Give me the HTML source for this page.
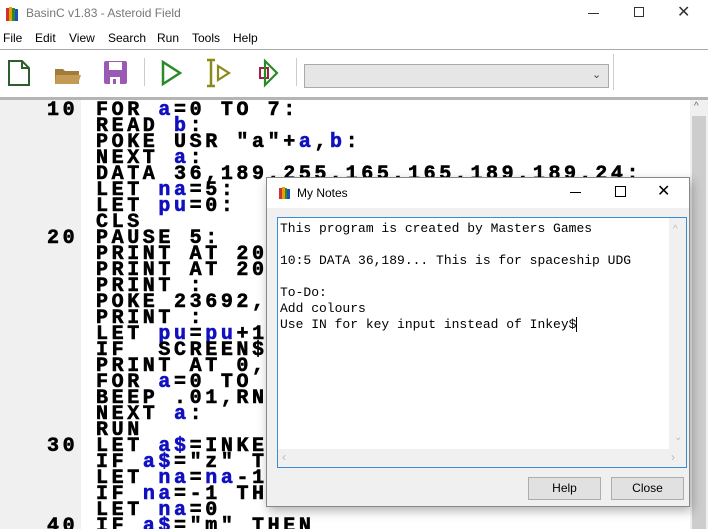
<!DOCTYPE html>
<html><head><style>
*{margin:0;padding:0;box-sizing:border-box}
body{width:708px;height:529px;overflow:hidden;background:#fff;font-family:"Liberation Sans",sans-serif;position:relative}
.abs{position:absolute}
.menu span{position:absolute;top:31px;font-size:12px;color:#000}
.code{position:absolute;left:0;top:100px;width:690px;height:429px;background:#fff;overflow:hidden}
.gut{position:absolute;left:0;top:0;width:81px;height:429px;background:#f0f0f0}
.ln{position:absolute;height:16px;line-height:16px;margin-top:3px;font-family:"Liberation Mono",monospace;font-weight:bold;font-size:20px;letter-spacing:3.6px;white-space:pre;color:#000;-webkit-text-stroke:0.6px currentColor}
.b{color:#1010c0}
.mono{font-family:"Liberation Mono",monospace;font-size:13px;white-space:pre;color:#000}
</style></head><body>
<svg class="abs" style="left:6px;top:6px" width="14" height="16"><rect x="0" y="2" width="3" height="13" fill="#c33"/><rect x="3" y="1" width="3" height="14" fill="#e8a000"/><rect x="6" y="2" width="3" height="13" fill="#2a8a2a"/><rect x="9" y="3" width="3" height="12" fill="#2050c0"/></svg>
<div class="abs" style="left:26px;top:6px;font-size:12px;color:#777">BasinC v1.83 - Asteroid Field</div>
<div class="abs" style="left:588px;top:13px;width:11px;height:1px;background:#333"></div>
<div class="abs" style="left:634px;top:7px;width:10px;height:10px;border:1px solid #333"></div>
<div class="abs" style="left:677px;top:2px;font-size:16px;color:#333">✕</div>
<div class="menu"><span style="left:3px">File</span><span style="left:35px">Edit</span><span style="left:69px">View</span><span style="left:108px">Search</span><span style="left:157px">Run</span><span style="left:192px">Tools</span><span style="left:233px">Help</span></div>
<div class="abs" style="left:0;top:49px;width:708px;height:1px;background:#aaa"></div>
<svg class="abs" style="left:0;top:50px" width="300" height="48">
<path d="M9 11 H22 L29 18 V35 H9 Z M22 11 V18 H29" fill="none" stroke="#2e5e2e" stroke-width="2"/>
<path d="M55 19 H63 L65 21 H79 V34 H55 Z" fill="#a07c3a"/><path d="M56 25 H81 L78 34 H55 Z" fill="#c49a55"/>
<rect x="104" y="11" width="23" height="23" rx="2" fill="#9b59b6"/><rect x="109" y="12" width="13" height="8" fill="#fff"/><rect x="110" y="27" width="10" height="7" fill="#fff"/><rect x="113" y="29" width="3" height="5" fill="#9b59b6"/>
<rect x="144" y="8" width="1" height="28" fill="#ccc"/>
<path d="M163 12 L180 23 L163 34 Z" fill="none" stroke="#2a8a2a" stroke-width="2.5"/>
<path d="M211 10 V36 M207 10 H215 M207 36 H215" stroke="#8a8a1a" stroke-width="2.5" fill="none"/>
<path d="M218 16 L229 23 L218 30 Z" fill="none" stroke="#8a8a1a" stroke-width="2.2"/>
<rect x="260" y="18" width="8" height="10" fill="none" stroke="#a02040" stroke-width="2"/>
<path d="M265 11 L277 23 L265 35 Z" fill="none" stroke="#2a8a2a" stroke-width="2.2"/>
<rect x="296" y="8" width="1" height="28" fill="#ccc"/>
</svg>
<div class="abs" style="left:304px;top:64px;width:305px;height:24px;background:#e6e6e6;border:1px solid #aaa"></div>
<div class="abs" style="left:592px;top:68px;font-size:11px;color:#444">⌄</div>
<div class="abs" style="left:613px;top:54px;width:1px;height:36px;background:#ccc"></div>
<div class="abs" style="left:0;top:97px;width:708px;height:3px;background:#b5b5b5"></div>
<div class="code"><div class="gut"></div>
<div class="ln" style="top:0;left:47px">10</div><div class="ln" style="top:0;left:96px">FOR <span class="b">a</span>=0 TO 7:</div>
<div class="ln" style="top:16px;left:96px">READ <span class="b">b</span>:</div>
<div class="ln" style="top:32px;left:96px">POKE USR "a"+<span class="b">a</span>,<span class="b">b</span>:</div>
<div class="ln" style="top:48px;left:96px">NEXT <span class="b">a</span>:</div>
<div class="ln" style="top:64px;left:96px">DATA 36,189,255,165,165,189,189,24:</div>
<div class="ln" style="top:80px;left:96px">LET <span class="b">na</span>=5:</div>
<div class="ln" style="top:96px;left:96px">LET <span class="b">pu</span>=0:</div>
<div class="ln" style="top:112px;left:96px">CLS</div>
<div class="ln" style="top:128px;left:47px">20</div><div class="ln" style="top:128px;left:96px">PAUSE 5:</div>
<div class="ln" style="top:144px;left:96px">PRINT AT 20,0</div>
<div class="ln" style="top:160px;left:96px">PRINT AT 20,0</div>
<div class="ln" style="top:176px;left:96px">PRINT :</div>
<div class="ln" style="top:192px;left:96px">POKE 23692,</div>
<div class="ln" style="top:208px;left:96px">PRINT :</div>
<div class="ln" style="top:224px;left:96px">LET <span class="b">pu</span>=<span class="b">pu</span>+1</div>
<div class="ln" style="top:240px;left:96px">IF  SCREEN$</div>
<div class="ln" style="top:256px;left:96px">PRINT AT 0,</div>
<div class="ln" style="top:272px;left:96px">FOR <span class="b">a</span>=0 TO</div>
<div class="ln" style="top:288px;left:96px">BEEP .01,RN</div>
<div class="ln" style="top:304px;left:96px">NEXT <span class="b">a</span>:</div>
<div class="ln" style="top:320px;left:96px">RUN</div>
<div class="ln" style="top:336px;left:47px">30</div><div class="ln" style="top:336px;left:96px">LET <span class="b">a$</span>=INKE</div>
<div class="ln" style="top:352px;left:96px">IF <span class="b">a$</span>="z" T</div>
<div class="ln" style="top:368px;left:96px">LET <span class="b">na</span>=<span class="b">na</span>-1</div>
<div class="ln" style="top:384px;left:96px">IF <span class="b">na</span>=-1 TH</div>
<div class="ln" style="top:400px;left:96px">LET <span class="b">na</span>=0</div>
<div class="ln" style="top:416px;left:47px">40</div><div class="ln" style="top:416px;left:96px">IF <span class="b">a$</span>="m" THEN</div>
</div>
<div class="abs" style="left:690px;top:100px;width:18px;height:429px;background:#f0f0f0"></div>
<div class="abs" style="left:692px;top:116px;width:14px;height:413px;background:#cdcdcd"></div>
<div class="abs" style="left:694px;top:101px;font-size:10px;color:#666">^</div>
<div class="abs" style="left:266px;top:177px;width:424px;height:330px;background:#f0f0f0;border:1px solid #888;box-shadow:2px 4px 10px rgba(0,0,0,0.3)">
<div class="abs" style="left:0;top:0;width:422px;height:30px;background:#fff"></div>
<svg class="abs" style="left:12px;top:8px" width="12" height="14"><rect x="0" y="2" width="3" height="11" fill="#c33"/><rect x="3" y="1" width="3" height="12" fill="#e8a000"/><rect x="6" y="2" width="2" height="11" fill="#2a8a2a"/><rect x="8" y="3" width="3" height="10" fill="#2050c0"/></svg>
<div class="abs" style="left:30px;top:8px;font-size:12px;color:#000">My Notes</div>
<div class="abs" style="left:303px;top:14px;width:11px;height:1px;background:#000"></div>
<div class="abs" style="left:348px;top:8px;width:11px;height:11px;border:1px solid #000"></div>
<div class="abs" style="left:390px;top:3px;font-size:16px;color:#000">✕</div>
<div class="abs" style="left:10px;top:39px;width:410px;height:251px;background:#fff;border:1px solid #3c8ad0">
<div class="abs mono" style="left:2px;top:3px;line-height:16px">This program is created by Masters Games

10:5 DATA 36,189... This is for spaceship UDG

To-Do:
Add colours
Use IN for key input instead of Inkey$<span style="border-left:1px solid #000"></span></div>
<div class="abs" style="left:391px;top:0;width:17px;height:231px;background:#f0f0f0"></div>
<div class="abs" style="left:0;top:231px;width:408px;height:18px;background:#f0f0f0"></div>
<div class="abs" style="left:395px;top:6px;font-size:10px;color:#bbb">^</div>
<div class="abs" style="left:396px;top:214px;font-size:10px;color:#bbb">⌄</div>
<div class="abs" style="left:4px;top:232px;font-size:12px;color:#bbb">‹</div>
<div class="abs" style="left:393px;top:232px;font-size:12px;color:#bbb">›</div>
</div>
<div class="abs" style="left:261px;top:299px;width:73px;height:23px;background:#e1e1e1;border:1px solid #adadad;font-size:12px;text-align:center;line-height:21px">Help</div>
<div class="abs" style="left:344px;top:299px;width:73px;height:23px;background:#e1e1e1;border:1px solid #adadad;font-size:12px;text-align:center;line-height:21px">Close</div>
</div>
</body></html>
